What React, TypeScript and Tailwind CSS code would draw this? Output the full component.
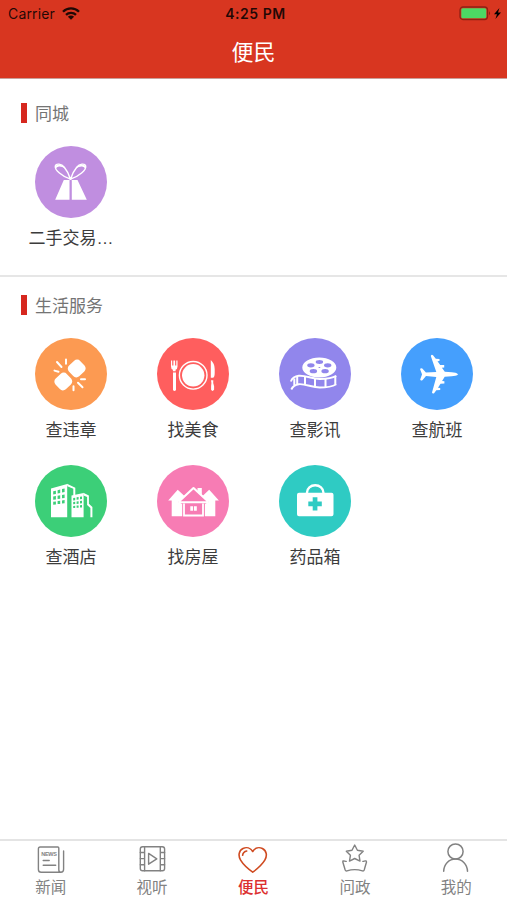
import type { ReactNode } from 'react'

type Service = { label: string; color: string; icon: ReactNode }

const cityServices: Service[] = [{ label: '二手交易…', color: 'bg-[#c08ee0]', icon: <GiftIcon /> }]

const lifeServices: Service[] = [
  { label: '查违章', color: 'bg-[#fc9a52]', icon: <ViolationIcon /> },
  { label: '找美食', color: 'bg-[#ff5e5e]', icon: <FoodIcon /> },
  { label: '查影讯', color: 'bg-[#9186ec]', icon: <FilmIcon /> },
  { label: '查航班', color: 'bg-[#459ffd]', icon: <PlaneIcon /> },
  { label: '查酒店', color: 'bg-[#3ccf78]', icon: <HotelIcon /> },
  { label: '找房屋', color: 'bg-[#f77cb4]', icon: <HouseIcon /> },
  { label: '药品箱', color: 'bg-[#2fcbc3]', icon: <MedkitIcon /> },
]

const tabs = [
  { label: '新闻', icon: <NewsIcon /> },
  { label: '视听', icon: <VideoIcon /> },
  { label: '便民', icon: <HeartIcon />, active: true },
  { label: '问政', icon: <StarIcon /> },
  { label: '我的', icon: <UserIcon /> },
]

export default function App() {
  return (
    <div className="flex h-[900px] w-[507px] flex-col overflow-hidden bg-white font-['Liberation_Sans','Noto_Sans_CJK_SC',sans-serif]">
      <header className="h-[79px] shrink-0 border-b border-[#c9a09a] bg-[#d83620]">
        <StatusBar />
        <h1 className="mt-[11px] text-center text-[22px] leading-8 text-white">便民</h1>
      </header>

      <main className="flex-1">
        <section className="h-[198px] border-b-2 border-[#e6e6e6] pt-[23px]">
          <SectionTitle>同城</SectionTitle>
          <ServiceGrid items={cityServices} />
        </section>
        <section className="pt-[17px]">
          <SectionTitle>生活服务</SectionTitle>
          <ServiceGrid items={lifeServices} />
        </section>
      </main>

      <nav className="grid h-[61px] shrink-0 grid-cols-5 border-t-2 border-[#e4e4e4]">
        {tabs.map((t) => (
          <div
            key={t.label}
            className={`flex flex-col items-center pt-px text-[15.5px] leading-5 ${t.active ? 'font-medium text-[#dc3030]' : 'text-[#828282]'}`}
          >
            {t.icon}
            <span className="mt-0.5">{t.label}</span>
          </div>
        ))}
      </nav>
    </div>
  )
}

function StatusBar() {
  return (
    <div className="grid h-[26px] grid-cols-3 items-center pr-1 pl-2 font-[Inter,sans-serif] text-black/85">
      <div className="flex items-center gap-[7px]">
        <span className="text-[14px] tracking-[0.15px]">Carrier</span>
        <svg width="18" height="13" viewBox="0 0 18 13" fill="none" stroke="currentColor" strokeWidth="2.3">
          <path d="M1 4.7a11.3 11.3 0 0 1 16 0" />
          <path d="M4 7.9a7 7 0 0 1 10 0" />
          <path d="M9 12.8 5.9 9.8a4.4 4.4 0 0 1 6.2 0z" fill="currentColor" stroke="none" />
        </svg>
      </div>
      <span className="text-center text-[14px] font-semibold tracking-[0.55px]">4:25 PM</span>
      <div className="flex items-center justify-end pr-[1.5px]">
        <svg width="43" height="15" viewBox="0 0 43 15">
          <rect x="1" y="1" width="27.5" height="12.5" rx="3" fill="none" stroke="#8f2114" strokeWidth="1.3" />
          <rect x="2.3" y="2.3" width="25" height="9.9" rx="1.5" fill="#4cd964" />
          <path d="M30 5.3q2.2 2 0 4z" fill="#8f2114" />
          <path d="M40.4 2 35 8.2h3l-1.6 4.8 5.6-6.4h-3z" fill="#000" />
        </svg>
      </div>
    </div>
  )
}

function SectionTitle({ children }: { children: ReactNode }) {
  return (
    <div className="flex h-[22px] items-center gap-2 pl-[21px]">
      <span className="h-5 w-1.5 bg-[#d6281f]" />
      <h2 className="pt-[3px] text-[17px] leading-[22px] text-[#747474]">{children}</h2>
    </div>
  )
}

function ServiceGrid({ items }: { items: Service[] }) {
  return (
    <div className="mt-[22px] grid grid-cols-[repeat(4,122px)] gap-y-5 pl-[10px]">
      {items.map((s) => (
        <div key={s.label} className="flex flex-col items-center">
          <div className={`size-[72px] rounded-full text-white ${s.color}`}>{s.icon}</div>
          <span className="mt-1.5 text-[17px] leading-[29px] text-[#3c3c3c]">{s.label}</span>
        </div>
      ))}
    </div>
  )
}

function Glyph({ children }: { children: ReactNode }) {
  return (
    <svg className="block size-[72px]" viewBox="0 0 72 72" fill="currentColor">
      {children}
    </svg>
  )
}

function GiftIcon() {
  return (
    <Glyph>
      <path d="M28.8 34h5.7v19.8H20.2zM36.8 34h5.7l9.3 19.8h-15z" />
      <path
        d="M35.5 33.2C27 30.5 19.5 24 20.3 20c.8-3 6.2-2.3 9 1.2 3 3.600 5 8 6.2 12ZM35.5 33.2c8.5-2.7 16-9.2 15.2-13.2-.8-3-6.2-2.3-9 1.2-3 3.600-5 8-6.2 12Z"
        fill="none"
        stroke="currentColor"
        strokeWidth="1.4"
      />
      <path d="M21 22.5q-1.5-4 3-3.7 4 .2 6.5 4-4-2.6-6.5-2.3-2.5.3-3 2ZM50 22.5q1.5-4-3-3.7-4 .2-6.5 4 4-2.6 6.5-2.3 2.5.3 3 2Z" />
    </Glyph>
  )
}

function ViolationIcon() {
  return (
    <Glyph>
      <rect x="34" y="23.1" width="15.4" height="14.8" rx="4.2" transform="rotate(-43 41.7 30.5)" />
      <rect x="20.6" y="36.1" width="15.4" height="14.8" rx="4.2" transform="rotate(-43 28.3 43.5)" />
      <path
        d="m19.5 32.6 4 1.2M22 24l4.5 5M31 21.5v4.3M38.5 48.3v4M43 44.8l4.5 4.4M46 41.3h4"
        stroke="currentColor"
        strokeWidth="2"
        strokeLinecap="round"
      />
    </Glyph>
  )
}

function FoodIcon() {
  return (
    <Glyph>
      <circle cx="36.2" cy="37.3" r="11.2" />
      <circle cx="36.2" cy="37.3" r="13.8" fill="none" stroke="currentColor" strokeWidth="1.4" />
      <path d="M14 22.500h1.200v5h1.200v-5h1.700v5h1.200v-5h1.200v6q0 2.600-1.900 3.300v1.500h-2.700v-1.500Q14 31.100 14 28.500zM16 34.500h3V52q-1.500 2-3 0z" />
      <path d="M53.800 22q3.900 3.500 3.900 9v4q0 4.500-2 4.800h-1.900zM54 42.200h2.300q-.6 3 .8 6v3.600q-1.700 2.200-3 0V48q.7-3-.1-5.800Z" />
    </Glyph>
  )
}

function FilmIcon() {
  return (
    <Glyph>
      <path
        fillRule="evenodd"
        d="M23.300 29.500a17 10 0 1 0 34 0a17 10 0 1 0-34 0zM36.700 24a3.700 1.900 0 1 0 7.400 0a3.700 1.900 0 1 0-7.400 0zM45 27.300a3.700 2.100 0 1 0 7.400 0a3.700 2.100 0 1 0-7.400 0zM28.200 27.300a3.700 2.100 0 1 0 7.400 0a3.700 2.100 0 1 0-7.400 0zM30.700 33.200a3.700 2.100 0 1 0 7.400 0a3.700 2.100 0 1 0-7.400 0zM42.400 33.200a3.700 2.100 0 1 0 7.400 0a3.700 2.100 0 1 0-7.400 0zM39.400 29.500a1 .6 0 1 0 2 0a1 .6 0 1 0-2 0z"
      />
      <g fill="none" stroke="currentColor">
        <path d="M11.800 43.500q2-5 8-5.700c7-.6 13 3.200 21 3.200 6.500 0 12.500-.7 16.500-3.200M12.300 51.500q2-4.500 7.500-5.300c7-.6 13 3.300 21 3.300 6.500 0 12.500-1 16.500-3.300" strokeWidth="1.9" />
        <path d="M15.300 40.500v7M18.200 38.500v7.500M26 39v8M36 41v8M46.500 40.500v8.500M56.300 38v8.500" strokeWidth="2" />
      </g>
    </Glyph>
  )
}

function PlaneIcon() {
  return (
    <Glyph>
      <path d="M57.200 36.300c-1 1.400-4.200 1.900-6.500 2l-7 .5-2.600 4.200 2.300.2v2.400l-3.900.2-2.500 3.900 2.200.2v2.200l-3.900.1-2.200 3q-1.600 1-2.100-.6l4.300-15.700-10.300-.8-3.600 4.200q-2 .6-2.200-.7l1.800-5-.1-.6-1.800-4.800q.3-1.500 2.200-.7l3.600 4 10.400-.6-5.500-15.900q.7-1.900 2.200-.8l2.800 3.500 3.700.2v2.200l-2 .2 2.700 3.600 4 .2v2.300l-2.300.3 2.900 4 7 .5c2.300.1 5.400.8 6.400 2.300z" />
    </Glyph>
  )
}

function HotelIcon() {
  return (
    <Glyph>
      <path
        fillRule="evenodd"
        d="M16 23.500 32.200 19v33.300H16zM18.200 26.300v3.300l2.700-.5v-3.400zM22.600 25.200v3.400l2.600-.5v-3.500zM27 24.100v3.500l2.600-.5v-3.600zM18.200 31.500v3.200l2.700-.3v-3.300zM22.600 30.700v3.300l2.600-.3v-3.400zM27 29.900v3.300l2.600-.3v-3.400zM18.200 36.700v3l2.700-.2v-3.100zM22.600 36.100v3l2.600-.2v-3.100zM27 35.400v3.200l2.600-.3v-3.200z"
      />
      <path d="m32 18.700 8.300 4v7.500l-2 .3v-6.700l-6-2.500z" />
      <path
        fillRule="evenodd"
        d="M36.500 30.500 48.600 28v24.300H36.500zM38.200 33v2.500l2-.3v-2.500zM41.600 32.300v2.500l2-.3V32zM45 31.700v2.500l2-.3v-2.500zM38.200 37v2.300l2-.2v-2.400zM41.600 36.500v2.400l2-.2v-2.400zM45 36v2.400l2-.2v-2.400zM38.200 40.900v2.200l2-.1v-2.300zM41.600 40.600v2.200l2-.1v-2.300zM45 40.300v2.200l2-.1v-2.300z"
      />
      <path d="m48.300 27.800 5.600 2.700v8.300l3.500 3.300v10.200h-2v-9.200l-3.300-3.200v-8l-3.600-1.500z" />
    </Glyph>
  )
}

function HouseIcon() {
  return (
    <Glyph>
      <path d="M20.700 24.700 28 31.500 21.500 37l3.700 2v12.300H14.700V35.500h-3.500zM52.200 24.700l-7.200 6.800 6.500 5.500-3.600 2v12.300h10.400V35.500h3.600z" />
      <path d="M40.500 23h4.300v7l-4.300-4z" />
      <path d="M22.800 35.700 36.500 23l13.800 12.700v1.600H22.800z" fill="none" stroke="currentColor" strokeWidth="2.1" strokeLinejoin="round" />
      <path d="M36.500 27.300 44.700 35H28.300z" className="fill-[#f77cb4]" />
      <path d="M27 38.500v12h19v-12" fill="none" stroke="currentColor" strokeWidth="1.8" />
      <path d="M33.300 41.200h2.800v4.600h-2.800zM37 41.200h2.800v4.600H37z" />
    </Glyph>
  )
}

function MedkitIcon() {
  return (
    <Glyph>
      <path
        fillRule="evenodd"
        d="M20 27.700h32.500q2 0 2 2v19.500q0 2-2 2H20q-2 0-2-2V29.700q0-2 2-2zM33.700 32.200v4.300h-4.400v4.700h4.400v4.300h4.700v-4.300h4.400v-4.700h-4.400v-4.300z"
      />
      <path d="M28 28.500v-1a8.200 7.300 0 0 1 16.400 0v1" fill="none" stroke="currentColor" strokeWidth="2.4" />
    </Glyph>
  )
}

function TabGlyph({ children }: { children: ReactNode }) {
  return (
    <svg className="block h-[34px] w-9" viewBox="0 0 36 34" fill="none" stroke="currentColor" strokeWidth="1.4" strokeLinecap="round" strokeLinejoin="round">
      {children}
    </svg>
  )
}

function NewsIcon() {
  return (
    <TabGlyph>
      <path d="M7.200 5h17.600q1 0 1 1v21.700q0 2.500 2 2.500 2.800 0 2.800-3V9M27.800 30.200H8.200q-2.800 0-2.800-2.800V6.800Q5.400 5 7.200 5" />
      <path d="M10.200 18.500h6M10.200 23.300h12.500" />
      <text x="8.3" y="14.3" fontSize="5.5" fontWeight="bold" fill="currentColor" stroke="none" textLength="15.5">
        NEWS
      </text>
    </TabGlyph>
  )
}

function VideoIcon() {
  return (
    <TabGlyph>
      <rect x="6.3" y="4.700" width="24.300" height="24" rx="2.300" />
      <path d="M10.600 4.700v24M26.300 4.700v24M6.300 10.500h4.300M6.300 16.600h4.300M6.300 22.700h4.300M26.300 10.500h4.300M26.300 16.600h4.300M26.300 22.700h4.300M14.600 11.400v10.800l8.200-5.400z" />
    </TabGlyph>
  )
}

function HeartIcon() {
  return (
    <TabGlyph>
      <g className="stroke-[#cf4a20]" strokeWidth="1.6" transform="translate(0 1)">
        <path d="M17.700 8.500C15.500 4.800 11.500 3.800 8 5.500c-4.500 2.300-4.900 7.500-2.400 11.700 2.600 4.300 7.200 8.500 12.100 12 4.900-3.500 9.500-7.700 12.100-12 2.500-4.200 2.100-9.400-2.400-11.700-3.500-1.700-7.500-.7-9.700 3Z" />
        <path d="M7.600 12.300q.5-3.600 4.100-4.300" />
      </g>
    </TabGlyph>
  )
}

function StarIcon() {
  return (
    <TabGlyph>
      <path d="m17.700 3 2.700 5.200 5.800 1-4.100 4.100.9 5.800-5.300-2.600-5.200 2.600.9-5.800-4.100-4.100 5.700-1z" />
      <path d="M9.300 19.400c-1.200.1-2.200-.9-3.300-.4L5.800 20l2.400 8q.5 1.300 1.800.9 7.700-2.600 15.400 0 1.300.4 1.800-.9l2.300-8-.4-1c-1.100-.5-2.200.5-3.300.4" />
    </TabGlyph>
  )
}

function UserIcon() {
  return (
    <TabGlyph>
      <circle cx="17.5" cy="9.5" r="7.6" strokeWidth="1.5" />
      <path d="M5.700 29.300c.2-7.300 5.300-12.200 11.800-12.200s11.700 4.900 12 12.200" strokeWidth="1.5" />
    </TabGlyph>
  )
}
